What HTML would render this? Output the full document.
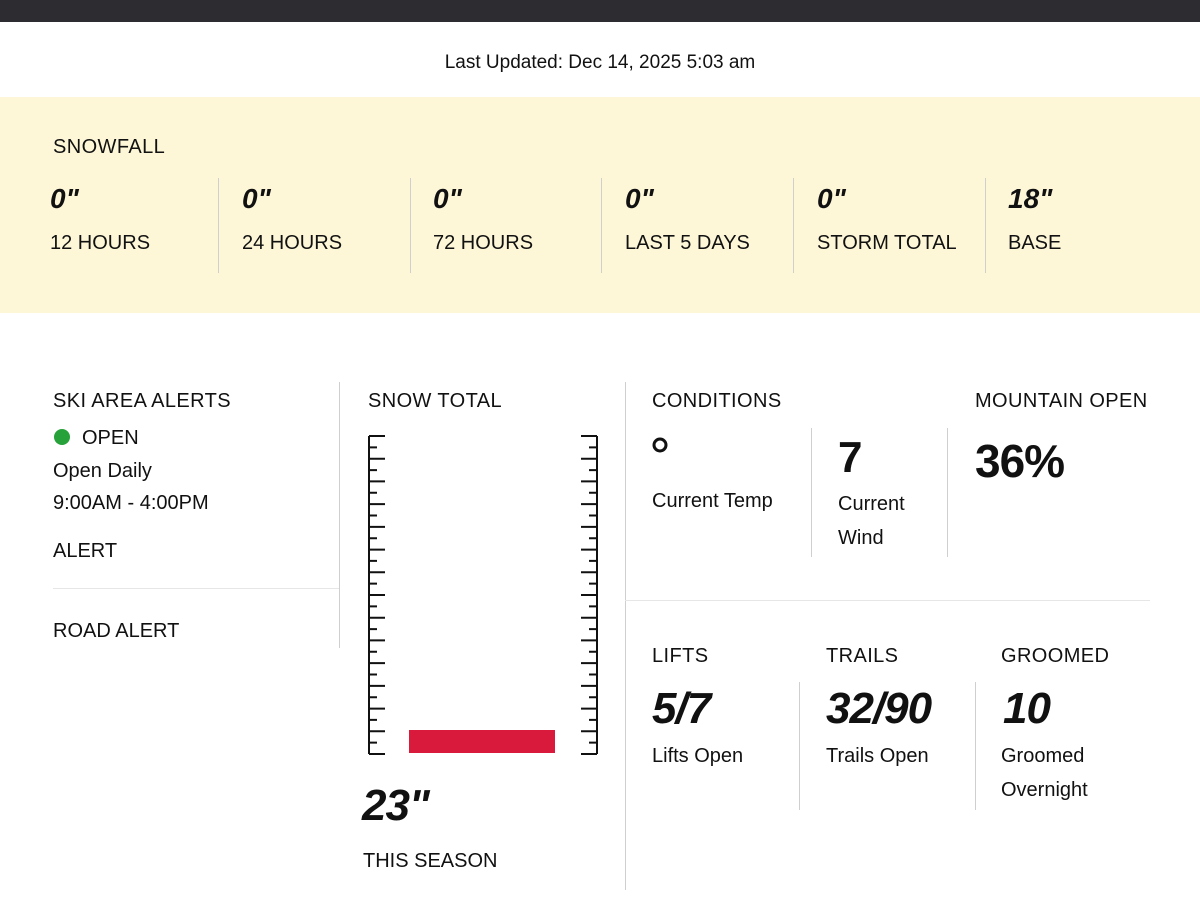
<!DOCTYPE html>
<html><head><meta charset="utf-8"><style>
*{margin:0;padding:0;box-sizing:border-box}
body{width:1200px;height:900px;position:relative;background:#fff;font-family:"Liberation Sans",sans-serif;color:#111;overflow:hidden}
.t{position:absolute;line-height:1.2;white-space:nowrap;font-size:20px;margin-top:4px}
.h{letter-spacing:0.4px}
.n{font-weight:bold;font-style:italic;font-size:28px}
.b{font-weight:bold;font-size:44px}
.bi{font-weight:bold;font-style:italic;font-size:44px;letter-spacing:-1px}
.v{position:absolute;width:1px;background:#cfcfcf}
.hr{position:absolute;height:1px;background:#e6e6e6}
</style></head><body>
<div style="position:absolute;left:0;top:0;width:1200px;height:22px;background:#2c2c31"></div>
<div class="t" style="left:0;width:1200px;text-align:center;top:48px;font-size:19px">Last Updated: Dec 14, 2025 5:03 am</div>
<div style="position:absolute;left:0;top:97px;width:1200px;height:216px;background:#fdf7d8"></div>
<div class="t h" style="left:53px;top:131px">SNOWFALL</div>
<div class="t n" style="left:50px;top:178px">0"</div>
<div class="t n" style="left:242px;top:178px">0"</div>
<div class="t n" style="left:433px;top:178px">0"</div>
<div class="t n" style="left:625px;top:178px">0"</div>
<div class="t n" style="left:817px;top:178px">0"</div>
<div class="t n" style="left:1008px;top:178px">18"</div>
<div class="t" style="left:50px;top:227px">12 HOURS</div>
<div class="t" style="left:242px;top:227px">24 HOURS</div>
<div class="t" style="left:433px;top:227px">72 HOURS</div>
<div class="t" style="left:625px;top:227px">LAST 5 DAYS</div>
<div class="t" style="left:817px;top:227px">STORM TOTAL</div>
<div class="t" style="left:1008px;top:227px">BASE</div>
<div class="v" style="left:218px;top:178px;height:95px"></div>
<div class="v" style="left:410px;top:178px;height:95px"></div>
<div class="v" style="left:601px;top:178px;height:95px"></div>
<div class="v" style="left:793px;top:178px;height:95px"></div>
<div class="v" style="left:985px;top:178px;height:95px"></div>

<div class="t h" style="left:53px;top:385px">SKI AREA ALERTS</div>
<div style="position:absolute;left:54px;top:429px;width:16px;height:16px;border-radius:50%;background:#27a23a"></div>
<div class="t" style="left:82px;top:422px">OPEN</div>
<div class="t" style="left:53px;top:455px">Open Daily</div>
<div class="t" style="left:53px;top:487px">9:00AM - 4:00PM</div>
<div class="t" style="left:53px;top:535px">ALERT</div>
<div class="hr" style="left:53px;top:588px;width:286px"></div>
<div class="t" style="left:53px;top:615px">ROAD ALERT</div>
<div class="v" style="left:339px;top:382px;height:266px"></div>

<div class="t h" style="left:368px;top:385px">SNOW TOTAL</div>
<svg style="position:absolute;left:0;top:0" width="1200" height="900">
<g stroke="#111" stroke-width="2" fill="none">
<line x1="369" y1="436" x2="369" y2="754"/>
<line x1="597" y1="436" x2="597" y2="754"/>
<path d="M369 436h16M369 447.4h8M369 458.7h16M369 470.1h8M369 481.4h16M369 492.8h8M369 504.1h16M369 515.5h8M369 526.9h16M369 538.2h8M369 549.6h16M369 560.9h8M369 572.3h16M369 583.6h8M369 595h16M369 606.4h8M369 617.7h16M369 629.1h8M369 640.4h16M369 651.8h8M369 663.1h16M369 674.5h8M369 685.9h16M369 697.2h8M369 708.6h16M369 719.9h8M369 731.3h16M369 742.6h8M369 754h16"/>
<path d="M597 436h-16M597 447.4h-8M597 458.7h-16M597 470.1h-8M597 481.4h-16M597 492.8h-8M597 504.1h-16M597 515.5h-8M597 526.9h-16M597 538.2h-8M597 549.6h-16M597 560.9h-8M597 572.3h-16M597 583.6h-8M597 595h-16M597 606.4h-8M597 617.7h-16M597 629.1h-8M597 640.4h-16M597 651.8h-8M597 663.1h-16M597 674.5h-8M597 685.9h-16M597 697.2h-8M597 708.6h-16M597 719.9h-8M597 731.3h-16M597 742.6h-8M597 754h-16"/>
</g>
<rect x="409" y="730" width="146" height="23" fill="#d91a3c"/>
<circle cx="660" cy="445" r="6" fill="none" stroke="#111" stroke-width="3"/>
</svg>
<div class="t bi" style="left:362px;top:776px">23"</div>
<div class="t" style="left:363px;top:845px">THIS SEASON</div>
<div class="v" style="left:625px;top:382px;height:508px"></div>

<div class="t h" style="left:652px;top:385px">CONDITIONS</div>
<div class="t h" style="left:975px;top:385px">MOUNTAIN OPEN</div>
<div class="t" style="left:652px;top:485px">Current Temp</div>
<div class="v" style="left:811px;top:428px;height:129px"></div>
<div class="v" style="left:947px;top:428px;height:129px"></div>
<div class="t b" style="left:838px;top:428px">7</div>
<div class="t" style="left:838px;top:488px">Current</div>
<div class="t" style="left:838px;top:522px">Wind</div>
<div class="t b" style="left:975px;top:430px;font-size:46px;letter-spacing:-1px">36%</div>
<div class="hr" style="left:625px;top:600px;width:525px"></div>

<div class="t h" style="left:652px;top:640px">LIFTS</div>
<div class="t h" style="left:826px;top:640px">TRAILS</div>
<div class="t h" style="left:1001px;top:640px">GROOMED</div>
<div class="v" style="left:799px;top:682px;height:128px"></div>
<div class="v" style="left:975px;top:682px;height:128px"></div>
<div class="t bi" style="left:652px;top:679px">5/7</div>
<div class="t bi" style="left:826px;top:679px">32/90</div>
<div class="t bi" style="left:1003px;top:679px">10</div>
<div class="t" style="left:652px;top:740px">Lifts Open</div>
<div class="t" style="left:826px;top:740px">Trails Open</div>
<div class="t" style="left:1001px;top:740px">Groomed</div>
<div class="t" style="left:1001px;top:774px">Overnight</div>
</body></html>
